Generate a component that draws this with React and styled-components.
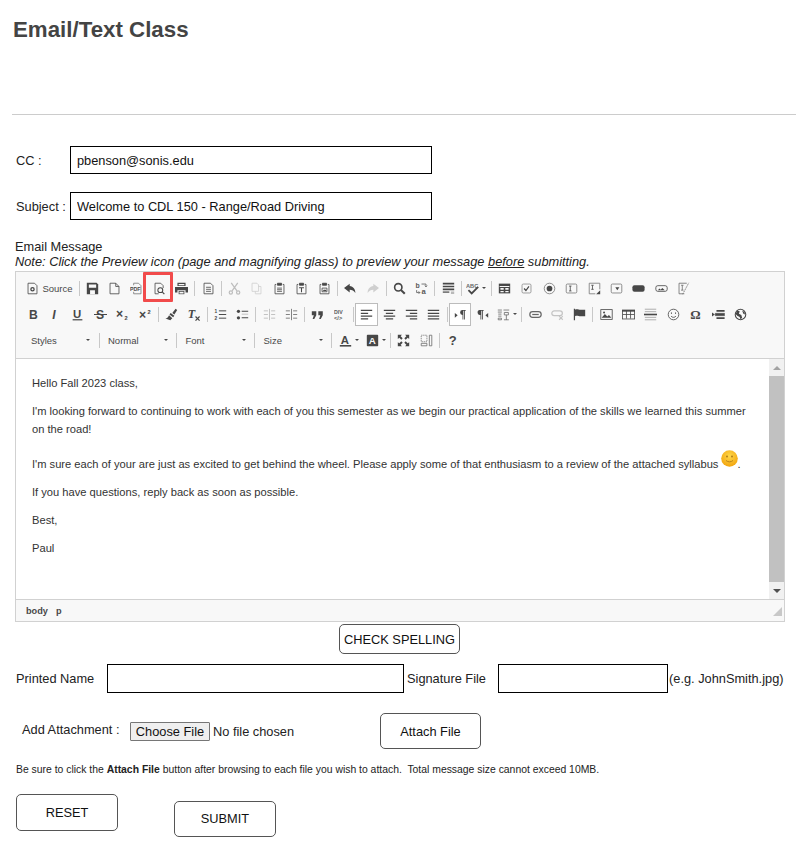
import React from "react";
import styled, { createGlobalStyle } from "styled-components";

const GlobalStyle = createGlobalStyle`
  html, body {
    margin: 0;
    padding: 0;
    background: #fff;
    font-family: "Liberation Sans", Arial, sans-serif;
    color: #222;
  }
`;

const Page = styled.div`
  width: 796px;
  height: 848px;
  overflow: hidden;
  box-sizing: border-box;
  padding-top: 17px;
`;

const Title = styled.h1`
  margin: 0 0 0 13px;
  font-size: 22.3px;
  line-height: 26px;
  font-weight: bold;
  color: #444;
`;

const Rule = styled.div`
  height: 1px;
  margin: 71px 0 31px 12px;
  background: #ccc;
`;

const FieldRow = styled.div`
  display: flex;
  align-items: center;
  height: 28px;
  margin-bottom: 18px;
  padding-left: 16px;
  font-size: 12.8px;
`;

const FieldLabel = styled.label`
  width: 54px;
  flex: none;
  white-space: nowrap;
`;

const TextBox = styled.input`
  box-sizing: border-box;
  width: ${(p) => p.$width}px;
  height: ${(p) => p.$height || 28}px;
  padding: 0 6px;
  flex: none;
  border: 1px solid #000;
  border-radius: 0;
  background: #fff;
  color: #111;
  font: 12.8px "Liberation Sans", Arial, sans-serif;
`;

const MessageLabel = styled.div`
  margin: 0 0 2px 15px;
  padding-top: 1px;
  font-size: 12.8px;
  line-height: 15px;
  em {
    display: block;
  }
  u {
    text-decoration: underline;
  }
`;

const Editor = styled.div`
  margin-left: 15px;
  width: 770px;
  height: 351px;
  box-sizing: border-box;
  display: flex;
  flex-direction: column;
  border: 1px solid #d1d1d1;
`;

const Toolbar = styled.div`
  height: 87px;
  flex: none;
  box-sizing: border-box;
  padding: 3px 0 0 6px;
  background: #f8f8f8;
  border-bottom: 1px solid #d1d1d1;
`;

const ToolRow = styled.div`
  display: flex;
  align-items: center;
  height: 26px;
`;

const ToolButton = styled.div`
  position: relative;
  box-sizing: border-box;
  flex: none;
  height: 23px;
  width: ${(p) => p.$width || 22.4}px;
  display: flex;
  align-items: center;
  justify-content: center;
  gap: 3px;
  font-size: 9.5px;
  color: #484848;
  ${(p) => p.$on && "background: #fff; border: 1px solid #bcbcbc;"}
`;

const ToolSep = styled.span`
  flex: none;
  width: 1px;
  height: 15px;
  margin: 0 1.5px;
  background: #c8c8c8;
`;

const Highlight = styled.span`
  position: absolute;
  left: -5px;
  top: -5px;
  width: 30px;
  height: 30px;
  box-sizing: border-box;
  border: 3px solid #f14b4b;
  border-radius: 1px;
`;

const Arrow = styled.span`
  width: 0;
  height: 0;
  flex: none;
  border: 2px solid transparent;
  border-top: 2.5px solid #484848;
  border-bottom: 0;
`;

const Combo = styled.div`
  flex: none;
  box-sizing: border-box;
  width: ${(p) => p.$width}px;
  height: 20px;
  display: flex;
  align-items: center;
  justify-content: space-between;
  padding: 0 7px 0 ${(p) => p.$left || 7}px;
  font-size: 9.5px;
  color: #484848;
`;

const Body = styled.div`
  flex: 1;
  min-height: 0;
  display: flex;
  background: #fff;
`;

const Content = styled.div`
  flex: 1;
  padding: 15px 16px 0;
  font-size: 11.15px;
  line-height: 18px;
  color: #333;
  p {
    margin: 0 0 10px;
  }
`;

const SmileyWrap = styled.span`
  display: inline-block;
  width: 17px;
  height: 17px;
  margin: 2px 0 0 -1px;
  vertical-align: 1px;
`;

const Scrollbar = styled.div`
  width: 15px;
  flex: none;
  display: flex;
  flex-direction: column;
  background: #f1f1f1;
`;

const ScrollEnd = styled.div`
  flex: none;
  height: 17px;
  display: flex;
  align-items: center;
  justify-content: center;
`;

const ScrollThumb = styled.div`
  flex: 1;
  background: #c1c1c1;
`;

const Triangle = styled.span`
  width: 0;
  height: 0;
  border: 4px solid transparent;
  ${(p) =>
    p.$down
      ? "border-top: 4px solid #505050; border-bottom: 0;"
      : "border-bottom: 4px solid #a3a3a3; border-top: 0;"}
`;

const PathBar = styled.div`
  flex: none;
  height: 22px;
  box-sizing: border-box;
  display: flex;
  align-items: center;
  justify-content: space-between;
  padding: 0 2px 0 10px;
  background: #f8f8f8;
  border-top: 1px solid #d1d1d1;
  font-size: 9.2px;
  font-weight: bold;
  color: #484848;
  span + span {
    margin-left: 8px;
  }
`;

const OutlineButton = styled.button`
  box-sizing: border-box;
  flex: none;
  width: ${(p) => p.$width}px;
  height: ${(p) => p.$height}px;
  padding: 0 0 ${(p) => p.$lift || 0}px;
  background: #fff;
  border: 1px solid #555;
  border-radius: 5px;
  color: #111;
  font: 12.8px "Liberation Sans", Arial, sans-serif;
  white-space: nowrap;
`;

const SpellRow = styled.div`
  display: flex;
  padding-left: 339px;
  margin: 2px 0 10px;
`;

const SignatureRow = styled.div`
  display: flex;
  align-items: center;
  height: 29px;
  padding-left: 16px;
  font-size: 12.8px;
`;

const SignatureLabel = styled.span`
  width: ${(p) => p.$width}px;
  flex: none;
  box-sizing: border-box;
  padding-left: ${(p) => p.$inset || 0}px;
  white-space: nowrap;
`;

const Hint = styled.span`
  margin-left: 1px;
  white-space: nowrap;
`;

const AttachRow = styled.div`
  display: flex;
  align-items: center;
  height: 36px;
  margin-top: 20px;
  padding-left: 22px;
  font-size: 12.8px;
`;

const AttachLabel = styled.span`
  width: 108px;
  flex: none;
  margin-top: -3px;
`;

const FileInput = styled.input`
  width: 250px;
  flex: none;
  font: 12.8px "Liberation Sans", Arial, sans-serif;
  &::file-selector-button {
    box-sizing: border-box;
    width: 80px;
    height: 19px;
    padding: 0;
    margin-right: 3px;
    background: #efefef;
    border: 1px solid #767676;
    border-radius: 1px;
    color: #111;
    font: inherit;
  }
`;

const SmallNote = styled.div`
  margin: 15px 0 0 16px;
  font-size: 10.4px;
  line-height: 12px;
  white-space: pre;
`;

const ActionRow = styled.div`
  display: flex;
  align-items: flex-start;
  gap: 56px;
  margin: 18px 0 0 16px;
`;

const Svg = styled.svg`
  display: block;
  flex: none;
`;

const Lowered = styled.div`
  margin-top: 7px;
`;

const C = "#474747";

// toolbar glyphs, all on a 16 unit grid
const glyphs = {
  source: (
    <g fill="none" stroke={C}>
      <path d="M2.5 1.5h8l3 3v10h-11z" />
      <circle cx="8" cy="9" r="2" strokeWidth="1.6" />
    </g>
  ),
  save: (
    <g>
      <path fill={C} d="M1 1h12l2 2v12H1z" />
      <path fill="#f8f8f8" d="M3.5 3h9v4h-9zM5 10h6v5H5z" />
    </g>
  ),
  page: <path fill="none" stroke={C} d="M2.5 1.5h7l4 4v9h-11zM9.5 1.5v4h4" />,
  pdf: (
    <g>
      <path fill="none" stroke="#777" d="M4.500 4V1.500h6l3 3V14.500h-9V12" />
      <text x="0" y="10.500" fontSize="6.500" fontWeight="bold" fill={C}>PDF</text>
    </g>
  ),
  preview: (
    <g fill="none" stroke={C}>
      <path d="M7 14.500H2.500v-13h7l3 3v3" />
      <circle cx="9" cy="10" r="3" strokeWidth="1.300" />
      <path d="M11.500 12.500l2.500 2.500" strokeWidth="1.500" />
    </g>
  ),
  print: (
    <g>
      <path fill={C} d="M3 1h10v4H3zM0 6h16v7h-3v-3H3v3H0z" />
      <path fill={C} d="M4.500 11h7v4h-7z" />
      <path fill="#f8f8f8" d="M5.500 12h5v2h-5zM4.500 2.500h7V4h-7z" />
    </g>
  ),
  templates: (
    <path fill="none" stroke={C} d="M2.500 1.500h8l3 3v10h-11zM5 6.500h6M5 9h6M5 11.500h6" />
  ),
  cut: (
    <g fill="none" stroke="#bdbdbd" strokeWidth="1.500">
      <path d="M4 1l7 10M12 1L5 11" />
      <circle cx="3.500" cy="13" r="2" />
      <circle cx="12.500" cy="13" r="2" />
    </g>
  ),
  copy: (
    <path fill="none" stroke="#cfcfcf" d="M2.500 1.500h6l2 2v8h-8zM10.500 5.500h3v9h-7v-3" />
  ),
  paste: (
    <g fill="none" stroke={C}>
      <path d="M4 3H2.500v11.500h11V3H12" />
      <path fill={C} d="M5.500 1.500h5V4h-5z" />
      <path d="M5 7.500h6M5 9.500h6M5 11.500h6" />
    </g>
  ),
  pasteText: (
    <g fill="none" stroke={C}>
      <path d="M4 3H2.500v11.500h11V3H12" />
      <path fill={C} d="M5.500 1.500h5V4h-5z" />
      <path d="M5 7h6M8 7v5.500" strokeWidth="1.300" />
    </g>
  ),
  pasteWord: (
    <g fill="none" stroke={C}>
      <path d="M4 3H2.500v11.500h11V3H12" />
      <path fill={C} d="M5.500 1.500h5V4h-5z" />
      <path d="M5 7.500h6v4.500H5z" />
      <path fill={C} stroke="none" d="M6 11l1.500-2 1 1 1-.8L10.500 11z" />
    </g>
  ),
  undo: <path fill={C} d="M7 2L0 7.500 7 13V9.500c3 0 5 1 7 4 0-4.500-2.500-8-7-8.500z" />,
  redo: <path fill="#cfcfcf" d="M9 2l7 5.500L9 13V9.500c-3 0-5 1-7 4 0-4.500 2.500-8 7-8.500z" />,
  find: (
    <g fill="none" stroke={C}>
      <circle cx="6.500" cy="6.500" r="4.500" strokeWidth="2" />
      <path d="M10 10l4.500 4.500" strokeWidth="2.600" />
    </g>
  ),
  replace: (
    <g>
      <text x="0.500" y="7.500" fontSize="8.500" fontWeight="bold" fill="#5a5a5a">b</text>
      <text x="8" y="15" fontSize="9.500" fontWeight="bold" fill="#5a5a5a">a</text>
      <path d="M8 2.500h5.500v3M12 4.500l1.500 1.500L15 4.500" fill="none" stroke="#5a5a5a" />
      <path d="M2 10v3h4M4.500 11.500L6 13l-1.500 1.500" fill="none" stroke="#5a5a5a" />
    </g>
  ),
  selectAll: (
    <g fill={C}>
      <path d="M1 1h14v2H1zM1 4.500h14v2H1zM1 8h14v2H1z" />
      <path d="M1 11.500h8v2H1zM11 12h4v.8h-4zM11 14h4v.8h-4z" opacity=".7" />
    </g>
  ),
  spell: (
    <g>
      <text x="0" y="7" fontSize="7" fontWeight="bold" fill="#6a6a6a">ABC</text>
      <path fill="none" stroke={C} strokeWidth="2.200" d="M3 10l4 4 8-8" />
    </g>
  ),
  form: (
    <g>
      <rect x="1" y="2" width="14" height="12" fill={C} />
      <path fill="#f8f8f8" d="M2 5h12v1H2zM3 7.500h4v2H3zM9 7.500h4v2H9zM3 11h4v1.500H3zM9 11h4v1.500H9z" />
    </g>
  ),
  checkbox: (
    <g fill="none" stroke={C}>
      <rect x="2.500" y="2.500" width="11" height="11" rx="1.500" stroke="#8a8a8a" />
      <path d="M5 8l2.300 2.500L11 5.500" strokeWidth="1.500" />
    </g>
  ),
  radio: (
    <g>
      <circle cx="8" cy="8" r="6.500" fill="none" stroke="#777" />
      <circle cx="8" cy="8" r="3.500" fill={C} />
    </g>
  ),
  textField: (
    <g fill="none" stroke={C}>
      <rect x="1.500" y="2.500" width="13" height="11" rx="1.500" stroke="#777" />
      <path d="M5 5h3M5 11h3M6.500 5v6" />
    </g>
  ),
  textArea: (
    <g fill="none" stroke={C}>
      <path d="M9 14.500H1.500v-13h13V9" stroke="#777" />
      <path d="M4 4h3M4 9h3M5.500 4v5" />
      <path d="M15 10v5h-5z" fill={C} stroke="none" />
    </g>
  ),
  select: (
    <g>
      <rect x="1.500" y="2.500" width="13" height="11" rx="1.500" fill="none" stroke="#777" />
      <path fill={C} d="M6.500 6.500h5L9 10z" />
    </g>
  ),
  button: <rect x="0.500" y="4" width="15" height="8" rx="2.500" fill={C} />,
  imageButton: (
    <g>
      <rect x="1" y="4.500" width="14" height="7" rx="2.500" fill="none" stroke={C} />
      <path fill={C} d="M3.500 10l2-2 1.500 1.500 2-2 3 2.500z" />
    </g>
  ),
  hidden: (
    <g fill="none" stroke="#6c6c6c">
      <path d="M9 14.500H2.500v-13H12" />
      <path d="M5 4h3M5 10h3M6.500 4v6" />
      <path d="M7 15L14.500 1" strokeDasharray="2 1" />
    </g>
  ),
  bold: <text x="2.500" y="13.500" fontSize="15" fontWeight="bold" fill={C}>B</text>,
  italic: <text x="4" y="13.500" fontSize="15" fontWeight="bold" fontStyle="italic" fill={C}>I</text>,
  underline: (
    <g>
      <text x="2.500" y="12" fontSize="14" fontWeight="bold" fill={C}>U</text>
      <path d="M2 14.500h12" stroke={C} strokeWidth="1.500" />
    </g>
  ),
  strike: (
    <g>
      <text x="2.500" y="13.500" fontSize="15" fontWeight="bold" fill={C}>S</text>
      <path d="M0 8h16" stroke={C} strokeWidth="1.300" />
    </g>
  ),
  sub: (
    <g fill={C}>
      <text x="0" y="12" fontSize="15" fontWeight="bold">×</text>
      <text x="10.500" y="15" fontSize="7" fontWeight="bold">2</text>
    </g>
  ),
  sup: (
    <g fill={C}>
      <text x="0" y="13" fontSize="15" fontWeight="bold">×</text>
      <text x="10.500" y="7" fontSize="7" fontWeight="bold">2</text>
    </g>
  ),
  brush: (
    <g fill={C}>
      <path d="M9 6l4-5 2 1.500-3.500 5.500z" />
      <path d="M7 6l4.500 3.500-1.500 2L5.500 8zM5 9l4 3.500L6.500 15 .5 13c2 0 3-1 4.500-4z" />
    </g>
  ),
  removeFormat: (
    <g fill={C}>
      <text x="1" y="12.500" fontSize="15" fontWeight="bold" fontStyle="italic" fontFamily="Liberation Serif">T</text>
      <path d="M10.500 10.500l5 5M15.500 10.500l-5 5" stroke={C} strokeWidth="1.500" />
    </g>
  ),
  ol: (
    <g>
      <path d="M6 3.500h9M6 8h9M6 12.500h9" stroke={C} strokeWidth="1.200" />
      <text x="0.500" y="6" fontSize="6" fontWeight="bold" fill={C}>1</text>
      <text x="0.500" y="14.500" fontSize="6" fontWeight="bold" fill={C}>2</text>
    </g>
  ),
  ul: (
    <g fill={C}>
      <circle cx="3" cy="4" r="2" />
      <circle cx="3" cy="12" r="2" />
      <path d="M7 3.500h8v1.200H7zM7 11.500h8v1.200H7z" />
      <path d="M7 7h8v1.200H7z" opacity=".3" />
    </g>
  ),
  outdent: (
    <g stroke="#b5b5b5" fill="none">
      <path d="M1 3.500h5M1 8h5M1 12.500h5M10 3.500h5M10 8h5M10 12.500h5M8 1v14" />
    </g>
  ),
  indent: (
    <g stroke="#666" fill="none">
      <path d="M1 3.500h5M1 8h5M1 12.500h5M10 3.500h5M10 8h5M10 12.500h5M8 1v14" />
    </g>
  ),
  quote: (
    <g fill={C}>
      <path d="M1 4h5.500v5L4 13.500H2L3.500 9H1zM9 4h5.500v5L12 13.500h-2L11.500 9H9z" />
    </g>
  ),
  div: (
    <g>
      <text x="0" y="7" fontSize="6.500" fontWeight="bold" fill="#5a5a5a">DIV</text>
      <text x="0" y="15" fontSize="7" fontWeight="bold" fill="#5a5a5a">&lt;/&gt;</text>
    </g>
  ),
  alignLeft: <path stroke={C} strokeWidth="1.500" d="M1 3h14M1 6.500h9M1 10h14M1 13.500h9" />,
  alignCenter: <path stroke={C} strokeWidth="1.500" d="M1 3h14M3.500 6.500h9M1 10h14M3.500 13.500h9" />,
  alignRight: <path stroke={C} strokeWidth="1.500" d="M1 3h14M6 6.500h9M1 10h14M6 13.500h9" />,
  justify: <path stroke={C} strokeWidth="1.500" d="M1 3h14M1 6.500h14M1 10h14M1 13.500h14" />,
  ltr: (
    <g fill={C}>
      <path d="M1 6l3.500 3L1 12z" />
      <path d="M9.500 2.500h5v1h-1V14h-1V3.500h-1V14h-1V8.500a3 3 0 010-6z" />
    </g>
  ),
  rtl: (
    <g fill={C}>
      <path d="M15 6l-3.500 3 3.500 3z" />
      <path d="M3.500 2.500h6v1h-1V14h-1V3.500h-1V14h-1V8.500a3 3 0 01-1-6z" />
    </g>
  ),
  language: (
    <g stroke="#6c6c6c" fill="none">
      <path d="M1 2.500h5M1 5h5M1.500 7.500h4M1.500 10h4M1.500 12.500h4v2h-4zM8 2.500h7M9 5.500h5v3H9zM11.500 8.500v6M8.500 14.500h6" />
    </g>
  ),
  link: (
    <g fill="none" stroke="#666">
      <rect x="1" y="4.500" width="14" height="7" rx="3.500" strokeWidth="1.500" />
      <path d="M4 8h8" strokeWidth="1.500" />
    </g>
  ),
  unlink: (
    <g fill="none" stroke="#c4c4c4">
      <rect x="1" y="3.500" width="13" height="6" rx="3" strokeWidth="1.500" />
      <path d="M10 10l4.500 4.500M14.500 10L10 14.500" strokeWidth="1.500" />
    </g>
  ),
  anchor: <path fill={C} d="M1 1h1.500v14H1zM2.500 2c3-1.500 5 1 9 0h3.500v8h-3.500c-4 1-6-1.500-9 0z" />,
  image: (
    <g>
      <rect x="1" y="2" width="14" height="12" fill="none" stroke={C} />
      <path fill={C} d="M2 12l4-4.500 3 3 2-2 3 3.500z" />
      <circle cx="5" cy="5.500" r="1.200" fill={C} />
    </g>
  ),
  table: (
    <g fill="none" stroke={C}>
      <rect x="0.500" y="2.500" width="15" height="11" />
      <path d="M0 3.500h16" strokeWidth="2" />
      <path d="M5.500 3v10M10.500 3v10M1 8h14" />
    </g>
  ),
  rule: (
    <g stroke="#7a7a7a">
      <path d="M1 1.500h14M1 4.500h14M1 11.500h14M1 14.500h14" opacity=".7" />
      <path d="M0 8h16" stroke={C} strokeWidth="2" />
    </g>
  ),
  smiley: (
    <g fill="none" stroke={C}>
      <circle cx="8" cy="8" r="6.500" />
      <path d="M5 10c1.500 2 4.500 2 6 0" />
      <path d="M5.500 5.500v1.500M10.500 5.500v1.500" strokeWidth="1.300" />
    </g>
  ),
  omega: <text x="1.500" y="14" fontSize="16" fontWeight="bold" fontFamily="Liberation Serif" fill={C}>Ω</text>,
  pageBreak: (
    <g fill={C}>
      <path d="M5.500 2.500h10v2h-10zM5.500 11.500h10v2h-10z" />
      <path d="M0 8h2.500M4 6.500h11.500v3H4z" stroke={C} strokeWidth=".5" />
      <path d="M0 5.500L3.500 8 0 10.500z" />
    </g>
  ),
  globe: (
    <g fill="none" stroke={C}>
      <circle cx="8" cy="8" r="6.500" strokeWidth="1.300" />
      <path fill={C} stroke="none" d="M4 3l3 1-1 3 3 1.500 1 3.500-2 2-1-3-3-1.500-2-2zM10 3l3 2 .5 3-2-1z" />
    </g>
  ),
  textColor: (
    <g>
      <text x="2" y="12" fontSize="14" fontWeight="bold" fill={C}>A</text>
      <path d="M1 14.500h14" stroke={C} strokeWidth="2" />
    </g>
  ),
  bgColor: (
    <g>
      <rect x="1" y="1" width="14" height="14" rx="1" fill={C} />
      <text x="3.500" y="12" fontSize="12" fontWeight="bold" fill="#f8f8f8">A</text>
    </g>
  ),
  maximize: (
    <g fill={C}>
      <path d="M1 1h5L4.500 2.800 7 5.300 5.300 7 2.800 4.500 1 6zM15 1v5l-1.800-1.500L10.700 7 9 5.300l2.500-2.500L10 1zM1 15v-5l1.800 1.500L5.300 9 7 10.700l-2.500 2.500L6 15zM15 15h-5l1.500-1.800L9 10.700 10.700 9l2.500 2.500L15 10z" />
    </g>
  ),
  showBlocks: (
    <g fill="none" stroke="#6c6c6c">
      <path d="M1.500 1.500h7v8h-7z" strokeDasharray="1.500 1" />
      <path d="M1.500 11.500h7v3h-7zM11.500 1.500h3v13h-3z" />
    </g>
  ),
  help: <text x="3.500" y="14" fontSize="16" fontWeight="bold" fill={C}>?</text>,
};

function Glyph({ name }) {
  return (
    <Svg width="13" height="13" viewBox="0 0 16 16" fontFamily="Liberation Sans">
      {glyphs[name]}
    </Svg>
  );
}

const ROW_ONE = [
  "save", "page", "pdf", "preview", "print", "|", "templates", "|", "cut", "copy", "paste",
  "pasteText", "pasteWord", "|", "undo", "redo", "|", "find", "replace", "|", "selectAll", "|",
  "spell+", "|", "form", "checkbox", "radio", "textField", "textArea", "select", "button",
  "imageButton", "hidden",
];

const ROW_TWO = [
  "bold", "italic", "underline", "strike", "sub", "sup", "|", "brush", "removeFormat", "|",
  "ol", "ul", "|", "outdent", "indent", "|", "quote", "div", "|", "alignLeft!", "alignCenter",
  "alignRight", "justify", "|", "ltr!", "rtl", "language+", "|", "link", "unlink", "anchor", "|",
  "image", "table", "rule", "smiley", "omega", "pageBreak", "globe",
];

function ToolItems({ items }) {
  return items.map((item, i) => {
    if (item === "|") return <ToolSep key={i} />;
    const name = item.replace(/[+!]$/, "");
    const menu = item.endsWith("+");
    return (
      <ToolButton key={i} $on={item.endsWith("!")} $width={menu ? 26 : undefined}>
        <Glyph name={name} />
        {menu && <Arrow />}
        {name === "preview" && <Highlight />}
      </ToolButton>
    );
  });
}

function Smiley() {
  return (
    <SmileyWrap>
      <Svg width="17" height="17" viewBox="0 0 17 17">
        <defs>
          <radialGradient id="face" cx="50%" cy="35%" r="65%">
            <stop offset="0%" stopColor="#ffd84a" />
            <stop offset="100%" stopColor="#f2a40e" />
          </radialGradient>
        </defs>
        <circle cx="8.500" cy="8.500" r="8.300" fill="url(#face)" />
        <path d="M5 10.500c2 1.800 5 1.800 7 0" fill="none" stroke="#b9821a" />
        <circle cx="6" cy="6.500" r=".9" fill="#a87616" />
        <circle cx="11" cy="6.500" r=".9" fill="#a87616" />
      </Svg>
    </SmileyWrap>
  );
}

export default function App() {
  return (
    <Page>
      <GlobalStyle />
      <Title>Email/Text Class</Title>
      <Rule />

      <FieldRow>
        <FieldLabel>CC :</FieldLabel>
        <TextBox $width={362} defaultValue="pbenson@sonis.edu" />
      </FieldRow>
      <FieldRow>
        <FieldLabel>Subject :</FieldLabel>
        <TextBox $width={362} defaultValue="Welcome to CDL 150 - Range/Road Driving" />
      </FieldRow>

      <MessageLabel>
        Email Message
        <em>
          Note: Click the Preview icon (page and magnifying glass) to preview your message{" "}
          <u>before</u> submitting.
        </em>
      </MessageLabel>

      <Editor>
        <Toolbar>
          <ToolRow>
            <ToolButton $width={55}>
              <Glyph name="source" />
              Source
            </ToolButton>
            <ToolSep />
            <ToolItems items={ROW_ONE} />
          </ToolRow>
          <ToolRow>
            <ToolItems items={ROW_TWO} />
          </ToolRow>
          <ToolRow>
            <Combo $width={75} $left={9}>Styles<Arrow /></Combo>
            <ToolSep />
            <Combo $width={73.5}>Normal<Arrow /></Combo>
            <ToolSep />
            <Combo $width={74}>Font<Arrow /></Combo>
            <ToolSep />
            <Combo $width={73}>Size<Arrow /></Combo>
            <ToolSep />
            <ToolButton $width={30}><Glyph name="textColor" /><Arrow /></ToolButton>
            <ToolButton $width={25}><Glyph name="bgColor" /><Arrow /></ToolButton>
            <ToolSep />
            <ToolItems items={["maximize", "showBlocks", "|", "help"]} />
          </ToolRow>
        </Toolbar>

        <Body>
          <Content>
            <p>Hello Fall 2023 class,</p>
            <p>
              I'm looking forward to continuing to work with each of you this semester as we begin
              our practical application of the skills we learned this summer on the road!
            </p>
            <p>
              I'm sure each of your are just as excited to get behind the wheel. Please apply some
              of that enthusiasm to a review of the attached syllabus <Smiley />.
            </p>
            <p>If you have questions, reply back as soon as possible.</p>
            <p>Best,</p>
            <p>Paul</p>
          </Content>
          <Scrollbar>
            <ScrollEnd><Triangle /></ScrollEnd>
            <ScrollThumb />
            <ScrollEnd><Triangle $down /></ScrollEnd>
          </Scrollbar>
        </Body>

        <PathBar>
          <div>
            <span>body</span>
            <span>p</span>
          </div>
          <Svg width="10" height="10" viewBox="0 0 10 10">
            <path d="M10 1v9H1z" fill="#c8c8c8" />
          </Svg>
        </PathBar>
      </Editor>

      <SpellRow>
        <OutlineButton $width={121} $height={30}>CHECK SPELLING</OutlineButton>
      </SpellRow>

      <SignatureRow>
        <SignatureLabel $width={91}>Printed Name</SignatureLabel>
        <TextBox $width={297} $height={29} />
        <SignatureLabel $width={94} $inset={3}>Signature File</SignatureLabel>
        <TextBox $width={170} $height={29} />
        <Hint>(e.g. JohnSmith.jpg)</Hint>
      </SignatureRow>

      <AttachRow>
        <AttachLabel>Add Attachment :</AttachLabel>
        <FileInput type="file" />
        <OutlineButton $width={101} $height={36}>Attach File</OutlineButton>
      </AttachRow>

      <SmallNote>
        Be sure to click the <b>Attach File</b> button after browsing to each file you wish to attach.  Total message size cannot exceed 10MB.
      </SmallNote>

      <ActionRow>
        <OutlineButton $width={102} $height={37}>RESET</OutlineButton>
        <Lowered>
          <OutlineButton $width={102} $height={36} $lift={2}>SUBMIT</OutlineButton>
        </Lowered>
      </ActionRow>
    </Page>
  );
}
